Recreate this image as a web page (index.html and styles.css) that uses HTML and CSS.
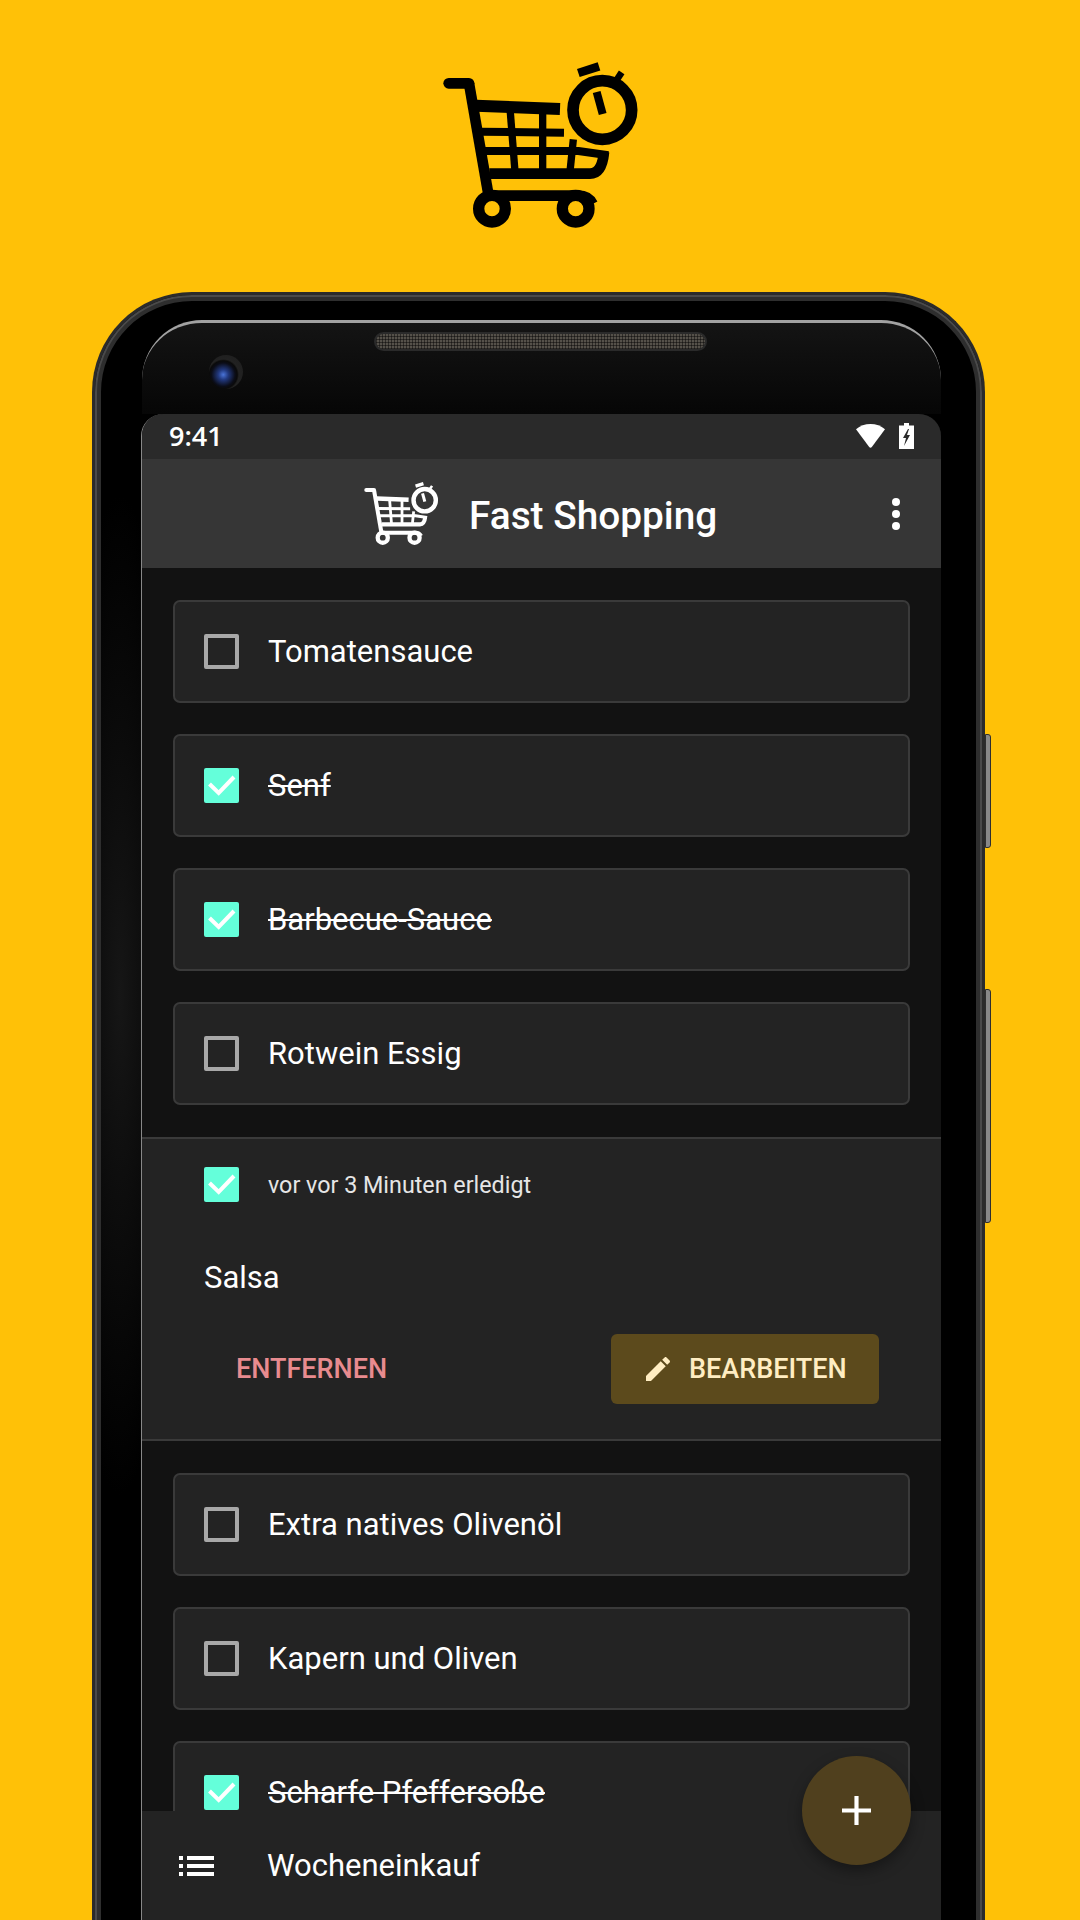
FILE: index.html
```html
<!DOCTYPE html>
<html lang="en">
<head>
  <meta charset="UTF-8" />
  <meta name="viewport" content="width=device-width, initial-scale=1.0"/>
  <title>Fast Shopping</title>
  <link rel="stylesheet" href="styles.css">
</head>
<body>

  <svg class="defs" width="0" height="0">
    <symbol id="cart" viewBox="120 60 600 510">
      <g fill="none" stroke="currentColor" stroke-linejoin="round">
        <path stroke-width="32" stroke-linecap="round" d="M146 130 H207"/>
        <path stroke-width="32" d="M207 130 L265 462"/>
        <path stroke-width="36" d="M228 197 L480 207"/>
        <path stroke-width="24" d="M240 275 L492 278"/>
        <path stroke-width="24" d="M252 333 H535 L625 346"/>
        <path stroke-width="32" d="M268 401 H570 Q606 401 612 336"/>
        <path stroke-width="22" d="M330 205 L345 395"/>
        <path stroke-width="22" d="M428 205 V395"/>
        <path stroke-width="22" d="M520 298 L510 395"/>
        <path stroke-width="32" d="M262 467 H535 Q565 467 578 492"/>
        <circle stroke-width="34" cx="276" cy="506" r="40"/>
        <circle stroke-width="34" cx="527" cy="506" r="40"/>
        <circle stroke-width="35" cx="607" cy="210" r="88"/>
        <path stroke-width="24" d="M590 156 L608 222"/>
        <path stroke-width="26" d="M535 99 L597 79"/>
        <path stroke-width="20" d="M650 120 L665 97"/>
      </g>
    </symbol>
    <symbol id="check" viewBox="0 0 35 35">
      <path d="M5.500 16 L14.700 25 L30 9" fill="none" stroke="#fff" stroke-width="4"/>
    </symbol>
  </svg>

  <div class="page">
    <header class="logo">
      <svg class="logo-icon"><use href="#cart"/></svg>
    </header>

    <div class="phone">
      <span class="side-btn side-btn-power"></span>
      <span class="side-btn side-btn-volume"></span>

      <div class="bezel">
        <span class="camera"></span>
        <span class="speaker"></span>
      </div>

      <div class="screen">
        <div class="statusbar">
          <span class="clock">9:41</span>
          <svg class="wifi" viewBox="0 0 29 24"><path d="M14.500 0C9 0 4 1.900 0 5.200L13 22.800a2 2 0 0 0 3 0L29 5.200C25 1.900 20 0 14.500 0z" fill="#fff"/></svg>
          <svg class="battery" viewBox="0 0 15 26"><path d="M5 0h5v2.500h5V26H0V2.500h5z" fill="#fff"/><path d="M9 6 L4 15 H7 L5 23 L11 12 H8 L10 6z" fill="#2a2a2a"/></svg>
        </div>

        <div class="appbar">
          <svg class="appbar-icon"><use href="#cart"/></svg>
          <h1 class="appbar-title">Fast Shopping</h1>
          <div class="menu-dots"><i></i><i></i><i></i></div>
        </div>

        <main class="list">
          <div class="item">
            <span class="box"></span>
            <span class="item-name">Tomatensauce</span>
          </div>
          <div class="item">
            <span class="box box-checked"><svg><use href="#check"/></svg></span>
            <span class="item-name done">Senf</span>
          </div>
          <div class="item">
            <span class="box box-checked"><svg><use href="#check"/></svg></span>
            <span class="item-name done">Barbecue-Sauce</span>
          </div>
          <div class="item">
            <span class="box"></span>
            <span class="item-name">Rotwein Essig</span>
          </div>

          <section class="expanded">
            <div class="expanded-top">
              <span class="box box-checked"><svg><use href="#check"/></svg></span>
              <span class="expanded-note">vor vor 3 Minuten erledigt</span>
            </div>
            <div class="expanded-name">Salsa</div>
            <div class="expanded-actions">
              <button class="btn-remove">ENTFERNEN</button>
              <button class="btn-edit">
                <svg viewBox="0 0 24 24"><path fill="#ffedc2" d="M3 17.250V21h3.750L17.810 9.940l-3.750-3.750L3 17.250zM20.710 7.040c.39-.39.39-1.020 0-1.410l-2.340-2.340c-.39-.39-1.020-.39-1.410 0l-1.830 1.830 3.750 3.750 1.830-1.830z"/></svg>
                BEARBEITEN
              </button>
            </div>
          </section>

          <div class="item">
            <span class="box"></span>
            <span class="item-name">Extra natives Olivenöl</span>
          </div>
          <div class="item">
            <span class="box"></span>
            <span class="item-name">Kapern und Oliven</span>
          </div>
          <div class="item">
            <span class="box box-checked"><svg><use href="#check"/></svg></span>
            <span class="item-name done">Scharfe Pfeffersoße</span>
          </div>
        </main>

        <footer class="bottombar">
          <svg class="list-icon" viewBox="0 0 35 20">
            <path fill="#fff" d="M0 0h4v4H0zM8 0h27v4H8zM0 8h4v4H0zM8 8h27v4H8zM0 16h4v4H0zM8 16h27v4H8z"/>
          </svg>
          <span class="bottombar-label">Wocheneinkauf</span>
        </footer>

        <button class="fab">
          <svg viewBox="0 0 28 28"><path d="M14 0V28M0 14H28" stroke="#fff" stroke-width="4"/></svg>
        </button>
      </div>
    </div>
  </div>

</body>
</html>
```

FILE: styles.css
```css
* {
  box-sizing: border-box;
}

body {
  margin: 0;
  font-family: Roboto, sans-serif;
  background: #ffc107;
}

.defs {
  position: absolute;
}

.page {
  height: 1920px;
  overflow: hidden;
}

.logo {
  height: 292px;
  padding: 60px 0 0 440px;
}

.logo-icon {
  display: block;
  width: 200px;
  height: 170px;
  color: #000;
}

/* phone frame */
.phone {
  position: relative;
  width: 893px;
  height: 1700px;
  margin-left: 92px;
  padding: 25px 41px 0 47px;
  background: radial-gradient(ellipse 60px 500px at 25px 700px, #161616, #000) no-repeat, #000;
  border: 3px solid #2b2b2b;
  border-bottom: 0;
  border-radius: 100px 100px 0 0;
  box-shadow: inset 0 0 0 2px #4a4a4a, inset 0 0 0 6px #2e2e2e;
}

.side-btn {
  position: absolute;
  left: 890px;
  width: 6px;
  background: #888;
  border: 1px solid #2e2e2e;
  border-radius: 0 3px 3px 0;
}

.side-btn-power {
  top: 439px;
  height: 114px;
}

.side-btn-volume {
  top: 694px;
  height: 234px;
}

.bezel {
  display: flex;
  height: 94px;
  background: linear-gradient(#141414, #060606);
  border-top: 3px solid #a2a2a2;
  border-radius: 60px 60px 0 0;
}

.camera {
  width: 34px;
  height: 34px;
  margin: 32px 0 0 67px;
  background: radial-gradient(circle at 42% 58%, #4a74d8 0, #22397f 18%, #0b0d18 42%, #0a0a0a 50%, #222 56%, #1c1c1c 100%);
  border-radius: 50%;
}

.speaker {
  width: 333px;
  height: 19px;
  margin: 9px 0 0 131px;
  background:
    repeating-linear-gradient(90deg, rgba(0,0,0,0.45) 0 1px, transparent 1px 3px),
    repeating-linear-gradient(0deg, rgba(0,0,0,0.45) 0 1px, transparent 1px 3px),
    #55514a;
  border: 2px solid #2a2a2a;
  border-radius: 10px;
}

/* screen */
.screen {
  position: relative;
  display: flex;
  flex-direction: column;
  width: 800px;
  height: 1506px;
  margin-left: -1px;
  background: #121212;
  border-left: 1px solid #888;
  border-radius: 22px 22px 0 0;
  overflow: hidden;
}

.statusbar {
  display: flex;
  align-items: center;
  height: 45px;
  flex-shrink: 0;
  padding: 0 27px 2px 27px;
  background: #2a2a2a;
}

.clock {
  flex: 1;
  font-family: "Open Sans", sans-serif;
  font-size: 27px;
  font-weight: 600;
  color: #fff;
}

.wifi {
  width: 29px;
  height: 24px;
}

.battery {
  width: 15px;
  height: 26px;
  margin-left: 14px;
}

.appbar {
  position: relative;
  display: flex;
  align-items: center;
  height: 109px;
  flex-shrink: 0;
  padding-left: 221px;
  background: #363636;
}

.appbar-icon {
  width: 76px;
  height: 65px;
  color: #fff;
}

.appbar-title {
  margin: 0 0 0 30px;
  padding-top: 4px;
  font-size: 38.800px;
  font-weight: 500;
  color: #fff;
}

.menu-dots {
  position: absolute;
  right: 41px;
  top: 39px;
  display: flex;
  flex-direction: column;
  gap: 4px;
}

.menu-dots i {
  width: 8px;
  height: 8px;
  background: #fff;
  border-radius: 50%;
}

.list {
  display: flex;
  flex-direction: column;
  flex: 1;
  min-height: 0;
  padding-top: 32px;
  overflow: hidden;
}

.item {
  display: flex;
  align-items: center;
  flex-shrink: 0;
  height: 103px;
  margin: 0 31px 31px 31px;
  padding-left: 29px;
  background: #232323;
  border: 2px solid #3a3a3a;
  border-radius: 7px;
}

.box {
  display: block;
  width: 35px;
  height: 35px;
  flex-shrink: 0;
  border: 4px solid #a8a8a8;
  border-radius: 2px;
}

.box-checked {
  background: #64ffda;
  border: 0;
}

.box svg {
  display: block;
  width: 35px;
  height: 35px;
}

.item-name {
  margin-left: 29px;
  font-size: 31px;
  color: #fff;
}

.done {
  text-decoration: line-through;
  text-decoration-thickness: 2px;
}

.expanded {
  flex-shrink: 0;
  height: 304px;
  margin: 1px 0 32px;
  padding: 28px 62px 0 62px;
  background: #232323;
  border-top: 2px solid #3a3a3a;
  border-bottom: 2px solid #3a3a3a;
}

.expanded-top {
  display: flex;
  align-items: center;
}

.expanded-note {
  margin-left: 29px;
  font-size: 23.300px;
  color: #e6e6e6;
}

.expanded-name {
  margin-top: 57px;
  font-size: 31px;
  color: #fff;
}

.expanded-actions {
  display: flex;
  align-items: center;
  justify-content: space-between;
  margin-top: 38px;
}

.expanded-actions button {
  font-family: Roboto, sans-serif;
  font-size: 27px;
  font-weight: 500;
  border: 0;
}

.btn-remove {
  margin-left: 32px;
  padding: 0;
  color: #e88b8f;
  background: none;
}

.btn-edit {
  display: flex;
  align-items: center;
  width: 268px;
  height: 70px;
  padding: 0 0 0 32px;
  color: #ffedc2;
  background: #5c4a1c;
  border-radius: 6px;
}

.btn-edit svg {
  width: 32px;
  height: 32px;
  margin: 0 15px 0 -1px;
}

.bottombar {
  display: flex;
  align-items: center;
  height: 109px;
  flex-shrink: 0;
  padding-left: 37px;
  background: #232323;
}

.list-icon {
  width: 35px;
  height: 20px;
}

.bottombar-label {
  margin-left: 53px;
  font-size: 31px;
  color: #fff;
}

.fab {
  position: absolute;
  right: 30px;
  bottom: 55px;
  width: 109px;
  height: 109px;
  padding: 40px;
  background: #50401e;
  border: 0;
  border-radius: 50%;
  box-shadow: 0 6px 14px rgba(0,0,0,0.35);
}

.fab svg {
  display: block;
  width: 29px;
  height: 29px;
}
```
